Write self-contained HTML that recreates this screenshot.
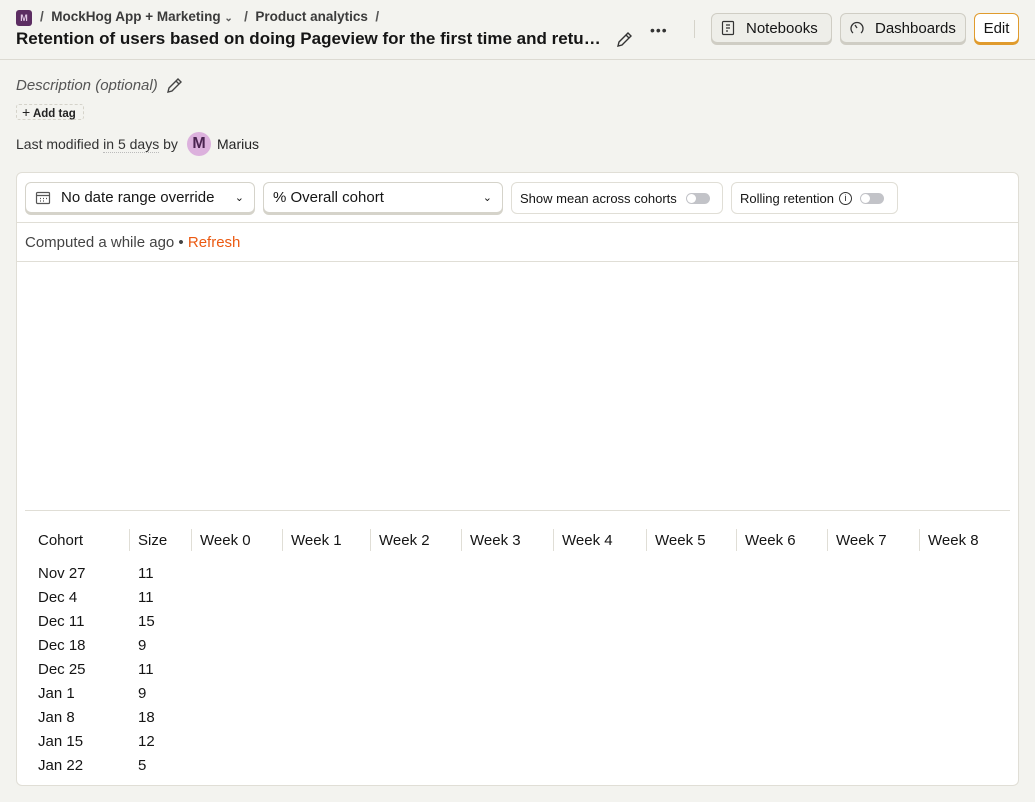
<!DOCTYPE html>
<html><head><meta charset="utf-8"><style>
*{box-sizing:border-box;margin:0;padding:0}
body{width:1035px;height:802px;background:#f3f3ef;font-family:"Liberation Sans",sans-serif;color:#151515;position:relative;overflow:hidden}
.a{position:absolute;white-space:nowrap}
.btn{position:absolute;border:1px solid #cfcdc4;border-radius:6px;background:#eeeee9;box-shadow:0 2px 0 #cfcdc4;font-size:15px;display:flex;align-items:center}
.card{position:absolute;left:16px;top:172px;width:1003px;height:614px;background:#fff;border:1px solid #e0ded6;border-radius:6px}
.sel{position:absolute;top:9px;height:31px;border:1px solid #d5d3ca;border-radius:6px;box-shadow:0 2px 0 #d5d3ca;background:#fff;font-size:15px;display:flex;align-items:center}
.tg{position:absolute;top:9px;height:32px;border:1px solid #e0ded6;border-radius:6px;font-size:13px;display:flex;align-items:center}
.sw{display:inline-block;width:24px;height:11px;border-radius:6px;background:#c2c3c8;position:relative}
.sw:after{content:"";position:absolute;left:1px;top:1px;width:9px;height:9px;border-radius:50%;background:#fff}
.th{position:absolute;top:358px;font-size:15px}
.sep{position:absolute;top:356px;width:1px;height:22px;background:#e0ded6}
.td{position:absolute;font-size:15px}
</style></head><body>
<div class="a" style="left:16px;top:10px;width:16px;height:16px;background:#5c2d62;border-radius:3px;color:#e0c8e4;font-size:9px;text-align:center;line-height:16px;font-weight:bold">M</div>
<div class="a" style="left:40px;top:9px;font-size:13.5px;color:#555;font-weight:bold">/ &nbsp;<span style="color:#3b3b3b">MockHog App + Marketing</span> <span style="font-size:10px">&#8964;</span> &nbsp;&nbsp;/ &nbsp;<span style="color:#3b3b3b">Product analytics</span> &nbsp;/</div>
<div class="a" style="left:16px;top:29px;font-size:17px;font-weight:bold;width:590px;overflow:hidden;text-overflow:ellipsis">Retention of users based on doing Pageview for the first time and returning</div>
<svg class="a" style="left:614px;top:30px" width="20" height="20" viewBox="0 0 20 20" fill="none" stroke="#333" stroke-width="1.4"><path d="M4 16l1-4 9-9 3 3-9 9z M12 5l3 3"/></svg>
<div class="a" style="left:650px;top:22px;font-size:14px;letter-spacing:1px;color:#333">•••</div>
<div class="a" style="left:694px;top:20px;width:1px;height:18px;background:#d5d3ca"></div>
<div class="btn" style="left:711px;top:13px;width:121px;height:30px;padding-left:8px"><svg width="16" height="16" viewBox="0 0 16 16" fill="none" stroke="#333" stroke-width="1.2"><rect x="2.5" y="1.5" width="11" height="13" rx="1"/><path d="M6 5h4M6 8h4M6 11h2M2 4h1M2 8h1M2 12h1"/></svg><span style="margin-left:10px">Notebooks</span></div>
<div class="btn" style="left:840px;top:13px;width:126px;height:30px;padding-left:8px"><svg width="16" height="16" viewBox="0 0 16 16" fill="none" stroke="#333" stroke-width="1.3"><path d="M4 13A6 6 0 1 1 12 13"/><path d="M8 8L6 5"/></svg><span style="margin-left:10px">Dashboards</span></div>
<div class="btn" style="left:974px;top:13px;width:45px;height:30px;background:#fff;border-color:#e09b2d;box-shadow:0 2px 0 #e09b2d;justify-content:center">Edit</div>
<div class="a" style="left:0;top:59px;width:1035px;height:1px;background:#dcdad2"></div>
<div class="a" style="left:16px;top:77px;font-size:15px;font-style:italic;color:#555">Description (optional)</div>
<svg class="a" style="left:164px;top:76px" width="20" height="20" viewBox="0 0 20 20" fill="none" stroke="#444" stroke-width="1.4"><path d="M4 16l1-4 9-9 3 3-9 9z M12 5l3 3"/></svg>
<div class="a" style="left:16px;top:104px;width:68px;height:16px;border:1px dashed #d5d3ca;border-radius:3px;font-size:11.5px;padding:0 5px;line-height:14px;font-weight:bold;color:#222"><span style="font-size:14px;font-weight:normal">+</span> Add tag</div>
<div class="a" style="left:16px;top:136px;font-size:14px;color:#333">Last modified <span style="border-bottom:1px dotted #bbb">in 5 days</span> by</div>
<div class="a" style="left:187px;top:132px;width:24px;height:24px;border-radius:50%;background:#dcb1dd;color:#4a2450;text-align:center;line-height:24px;font-size:16px;font-weight:bold">M</div>
<div class="a" style="left:217px;top:136px;font-size:14px;color:#222">Marius</div>
<div class="card">
<div class="sel" style="left:8px;width:230px;padding-left:9px"><svg width="16" height="16" viewBox="0 0 16 16" fill="none" stroke="#555" stroke-width="1.2"><rect x="1.5" y="2.5" width="13" height="11" rx="1"/><path d="M1.5 5.5h13M5 8.5h1M8 8.5h1M11 8.5h1M5 11h1M8 11h1"/></svg><span style="margin-left:10px">No date range override</span><span style="position:absolute;right:10px;font-size:11px">&#8964;</span></div>
<div class="sel" style="left:246px;width:240px;padding-left:9px">% Overall cohort<span style="position:absolute;right:10px;font-size:11px">&#8964;</span></div>
<div class="tg" style="left:494px;width:212px;padding-left:8px">Show mean across cohorts<span class="sw" style="margin-left:9px"></span></div>
<div class="tg" style="left:714px;width:167px;padding-left:8px">Rolling retention <span style="display:inline-block;width:13px;height:13px;border:1px solid #333;border-radius:50%;font-size:9px;text-align:center;line-height:11px;margin:0 8px 0 5px">i</span><span class="sw"></span></div>
<div class="a" style="left:0;top:49px;width:1001px;height:1px;background:#e0ded6"></div>
<div class="a" style="left:8px;top:61px;font-size:15px;color:#444">Computed a while ago • <span style="color:#eb5a12">Refresh</span></div>
<div class="a" style="left:0;top:88px;width:1001px;height:1px;background:#e0ded6"></div>
<div class="a" style="left:8px;top:337px;width:985px;height:1px;background:#e0ded6"></div>
<div class="th" style="left:21px;top:359px">Cohort</div>
<div class="sep" style="left:112px"></div><div class="th" style="left:121px;top:359px">Size</div>
<div class="sep" style="left:174px"></div><div class="th" style="left:183px;top:359px">Week 0</div>
<div class="sep" style="left:265px"></div><div class="th" style="left:274px;top:359px">Week 1</div>
<div class="sep" style="left:353px"></div><div class="th" style="left:362px;top:359px">Week 2</div>
<div class="sep" style="left:444px"></div><div class="th" style="left:453px;top:359px">Week 3</div>
<div class="sep" style="left:536px"></div><div class="th" style="left:545px;top:359px">Week 4</div>
<div class="sep" style="left:629px"></div><div class="th" style="left:638px;top:359px">Week 5</div>
<div class="sep" style="left:719px"></div><div class="th" style="left:728px;top:359px">Week 6</div>
<div class="sep" style="left:810px"></div><div class="th" style="left:819px;top:359px">Week 7</div>
<div class="sep" style="left:902px"></div><div class="th" style="left:911px;top:359px">Week 8</div>
<div class="td" style="left:21px;top:389px;line-height:24px">Nov 27<br>Dec 4<br>Dec 11<br>Dec 18<br>Dec 25<br>Jan 1<br>Jan 8<br>Jan 15<br>Jan 22</div>
<div class="td" style="left:121px;top:389px;line-height:24px">11<br>11<br>15<br>9<br>11<br>9<br>18<br>12<br>5</div>
</div>
</body></html>
